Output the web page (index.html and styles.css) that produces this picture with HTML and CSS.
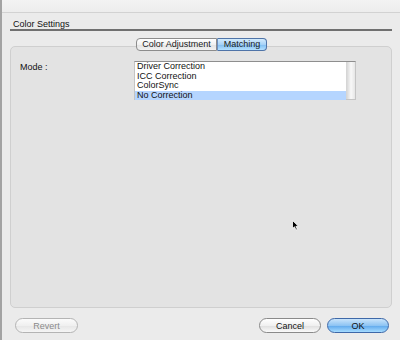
FILE: index.html
```html
<!DOCTYPE html>
<html>
  <head>
    <title>Color Settings</title>
    <link rel="stylesheet" href="styles.css">
  </head>
  <body>
    <div class="topbar"></div>

    <div class="header">
      <div class="title">Color Settings</div>
    </div>

    <div class="tabs">
      <span class="tab">Color Adjustment</span>
      <span class="tab selected">Matching</span>
    </div>

    <div class="group">
      <div class="row">
        <label class="label">Mode :</label>
        <div class="listbox">
          <ul class="items">
            <li>Driver Correction</li>
            <li>ICC Correction</li>
            <li>ColorSync</li>
            <li class="selected">No Correction</li>
          </ul>
          <div class="scrollbar"></div>
        </div>
      </div>
    </div>

    <div class="footer">
      <button class="btn" disabled>Revert</button>
      <div class="spacer"></div>
      <button class="btn">Cancel</button>
      <button class="btn default">OK</button>
    </div>

    <svg class="cursor" width="8" height="11" viewBox="0 0 8 11">
      <path d="M0.5 0.5 L0.5 8.5 L2.5 6.8 L4 10 L5.3 9.4 L3.9 6.3 L6.5 6.3 Z" fill="#000" stroke="#fff" stroke-width="0.8"/>
    </svg>
  </body>
</html>
```

FILE: styles.css
```css
body {
  margin: 0;
  width: 400px;
  height: 340px;
  overflow: hidden;
  position: relative;
  background-color: #ebebeb;
  box-shadow: inset 2px 0 0 #a3a3a3;
  font-family: "Liberation Sans", Arial, sans-serif;
  font-size: 9px;
  color: #111;
}

.topbar {
  height: 12px;
  background: linear-gradient(#f3f3f3, #ededed);
  border-bottom: 1px solid #d2d2d2;
  margin-left: 2px;
}

.header {
  padding: 0 8px 0 10px;
}

.title {
  margin-top: 6px;
  padding-left: 3px;
  line-height: 10px;
  border-bottom: 2px solid #707070;
}

.tabs {
  display: flex;
  justify-content: center;
  margin: 7px 0 -5px 0;
  padding-left: 3px;
  position: relative;
  z-index: 1;
}

.tab {
  display: block;
  height: 11px;
  line-height: 11px;
  white-space: nowrap;
  text-align: center;
  border: 1px solid #8c8c8c;
  background: linear-gradient(#ffffff, #f1f1f1 50%, #e2e2e2 51%, #f2f2f2);
  color: #1a1a1a;
}

.tab:first-child {
  border-radius: 4px 0 0 4px;
  width: 79px;
}

.tab.selected {
  width: 48px;
  border-color: #4f74a8;
  border-left: 1px solid #6d8fbf;
  border-radius: 0 4px 4px 0;
  background: linear-gradient(#d4ecfd, #a7d2f7 50%, #7fbdf1 51%, #b4e0ff);
}

.group {
  height: 262px;
  margin: 0 8px 0 10px;
  border: 1px solid #cfcfcf;
  border-radius: 5px;
  background-color: #e3e3e3;
  padding: 14px 0 0 9px;
  box-sizing: border-box;
}

.row {
  display: flex;
}

.label {
  width: 114px;
  padding-top: 2px;
  line-height: 9.5px;
}

.listbox {
  display: flex;
  width: 222px;
  height: 39px;
  box-sizing: border-box;
  background-color: #fff;
  border: 1px solid #c4c4c4;
  border-top-color: #8e8e8e;
}

.items {
  list-style-type: none;
  margin: 0;
  padding: 0;
  flex: 1;
}

.items li {
  height: 9.5px;
  line-height: 9.5px;
  padding-left: 2px;
}

.items li.selected {
  background-color: #b5d5ff;
}

.scrollbar {
  width: 8px;
  border-left: 1px solid #d6d6d6;
  background: linear-gradient(to right, #d8d8d8, #f8f8f8 50%, #e6e6e6);
}

.footer {
  display: flex;
  align-items: center;
  margin-top: 10px;
  padding: 0 11px 0 15px;
}

.spacer {
  flex: 1;
}

.btn {
  width: 62px;
  height: 15px;
  margin: 0;
  padding: 0;
  border: 1px solid #8a8a8a;
  border-radius: 8px;
  background: linear-gradient(#ffffff, #f0f0f0 50%, #dedede 51%, #fafafa);
  font-family: "Liberation Sans", Arial, sans-serif;
  font-size: 9px;
  color: #111;
}

.btn + .btn {
  margin-left: 6px;
}

.btn:disabled {
  width: 63px;
  border-color: #b4b4b4;
  color: #8a8a8a;
  background: linear-gradient(#fbfbfb, #f0f0f0 50%, #e6e6e6 51%, #f5f5f5);
}

.btn.default {
  border-color: #3e68a8;
  background: linear-gradient(#c9e4fb, #8ec4f3 50%, #5ea7ec 51%, #a6dcff);
}

.cursor {
  position: absolute;
  left: 292px;
  top: 220px;
}
```
